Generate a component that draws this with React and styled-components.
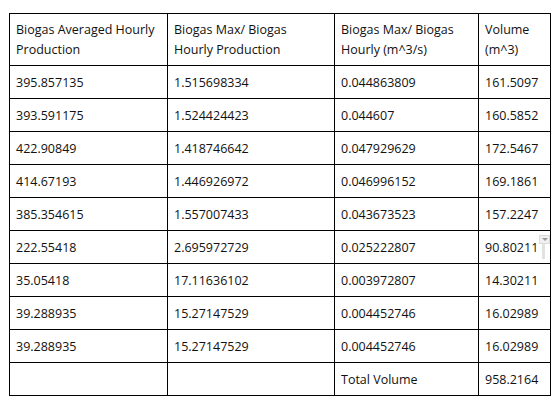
import styled, { createGlobalStyle } from "styled-components";

const GlobalStyle = createGlobalStyle`
  body {
    margin: 0;
    background: #ffffff;
    font-family: "Open Sans", "Lato", sans-serif;
  }
`;

const header = [
  "Biogas Averaged Hourly Production",
  "Biogas Max/ Biogas Hourly Production",
  "Biogas Max/ Biogas Hourly (m^3/s)",
  "Volume (m^3)",
];

const rows = [
  ["395.857135", "1.515698334", "0.044863809", "161.5097"],
  ["393.591175", "1.524424423", "0.044607", "160.5852"],
  ["422.90849", "1.418746642", "0.047929629", "172.5467"],
  ["414.67193", "1.446926972", "0.046996152", "169.1861"],
  ["385.354615", "1.557007433", "0.043673523", "157.2247"],
  ["222.55418", "2.695972729", "0.025222807", "90.80211"],
  ["35.05418", "17.11636102", "0.003972807", "14.30211"],
  ["39.288935", "15.27147529", "0.004452746", "16.02989"],
  ["39.288935", "15.27147529", "0.004452746", "16.02989"],
  ["", "", "Total Volume", "958.2164"],
];

export default function App() {
  return (
    <>
      <GlobalStyle />
      <Page>
        <Table>
          {header.map((h, i) => (
            <HeadCell key={"h" + i}>{h}</HeadCell>
          ))}
          {rows.map((row, r) =>
            row.map((v, c) => <Cell key={r + "-" + c}>{v}</Cell>)
          )}
          <PasteTag>
            <PasteArrow />
          </PasteTag>
        </Table>
      </Page>
    </>
  );
}

const Page = styled.div`
  padding: 13px 0 0 9px;
`;

const Table = styled.div`
  position: relative;
  display: grid;
  grid-template-columns: 158px 167px 144px 72px;
  grid-template-rows: 52px repeat(10, 33px);
  width: max-content;
  border-left: 1px solid #000;
  border-top: 1px solid #000;
  color: #111;
  font-size: 12.5px;
`;

const Cell = styled.div`
  box-sizing: border-box;
  display: flex;
  align-items: center;
  padding: 0 8px 0 6px;
  border-right: 1px solid #000;
  border-bottom: 1px solid #000;
  white-space: nowrap;
`;

const HeadCell = styled(Cell)`
  align-items: flex-start;
  padding-top: 6px;
  line-height: 20px;
  white-space: normal;
`;

const PasteTag = styled.div`
  position: absolute;
  right: 1px;
  top: 221px;
  width: 9px;
  height: 7px;
  background: #f0f0f0;
  border: 1px solid #dcdcdc;
  display: flex;
  justify-content: center;
  align-items: center;

  &::after {
    content: "";
    position: absolute;
    left: 2px;
    top: 8px;
    width: 3px;
    height: 15px;
    background: #e2e2e2;
  }
`;

const PasteArrow = styled.span`
  width: 0;
  height: 0;
  border-left: 3px solid transparent;
  border-right: 3px solid transparent;
  border-top: 3px solid #9a9a9a;
`;
